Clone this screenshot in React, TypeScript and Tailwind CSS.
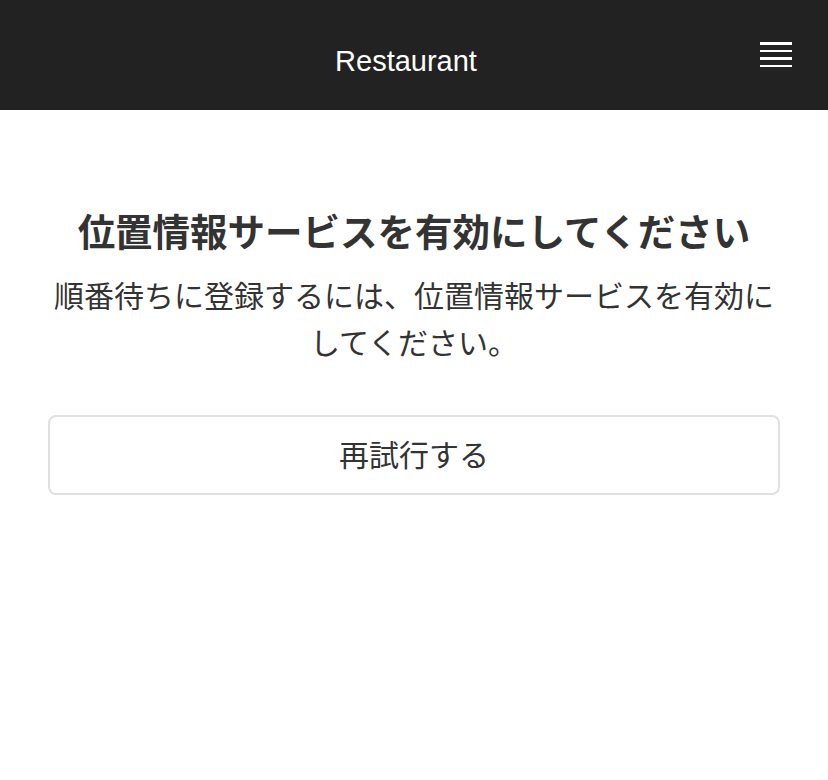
export default function App() {
  return (
    <div className="min-h-screen bg-white font-['Liberation_Sans','Noto_Sans_CJK_JP',sans-serif] text-[#333]">
      <header className="relative flex h-[110px] items-center justify-center bg-[#222] pr-4 pt-[14px]">
        <h1 className="text-[29px] text-white">Restaurant</h1>
        <button className="absolute right-9 top-[42px] flex w-8 flex-col gap-[5px]">
          <span className="block h-[2.5px] w-8 bg-white" />
          <span className="block h-[2.5px] w-8 bg-white" />
          <span className="block h-[2.5px] w-8 bg-white" />
          <span className="block h-[2.5px] w-8 bg-white" />
        </button>
      </header>

      <main className="px-12 pt-[99px]">
        <h2 className="text-center text-[37.5px] font-bold leading-[48px]">
          位置情報サービスを有効にしてください
        </h2>
        <p className="mt-[16px] text-center text-[30px] leading-[47px]">
          順番待ちに登録するには、位置情報サービスを有効にしてください。
        </p>
        <button className="mt-[48px] h-[80px] w-full rounded-lg border-2 border-[#e0e0e0] text-[30px] text-[#333]">
          再試行する
        </button>
      </main>
    </div>
  );
}
